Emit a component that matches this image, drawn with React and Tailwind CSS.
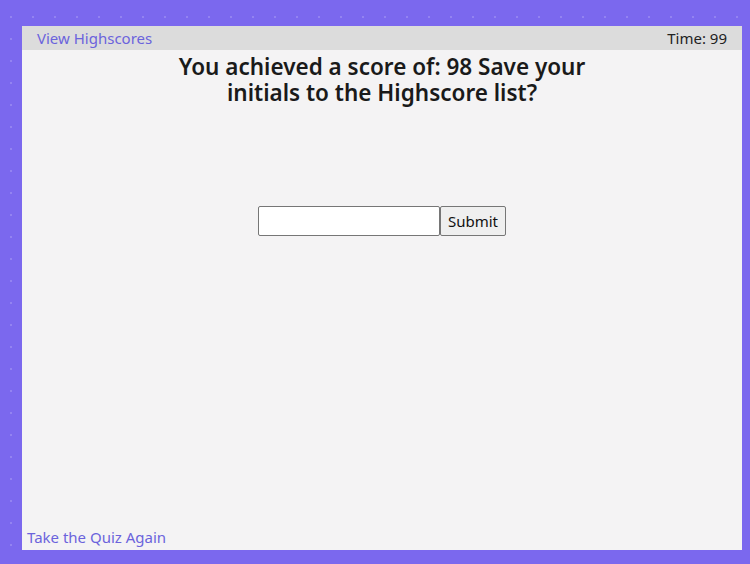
export default function App() {
  return (
    <div
      className="w-[750px] h-[564px] bg-[#7b68ee] bg-[radial-gradient(circle,rgba(255,255,255,0.18)_1px,transparent_1.5px)] bg-[size:22px_22px] bg-[position:0px_6px] pt-[26px] pl-[22px] pr-[8px] pb-[14px]"
      style={{ fontFamily: '"Noto Sans", "Open Sans", sans-serif' }}
    >
      <div className="h-full bg-[#f4f3f4] flex flex-col">
        {/* Header */}
        <div className="h-[24px] bg-[#dcdcdc] flex items-center justify-between pl-[15px] pr-[15px] text-[15px]">
          <a className="text-[#6b63dc]">View Highscores</a>
          <span className="text-[#222]">Time: 99</span>
        </div>

        {/* Content */}
        <div className="flex-1 flex flex-col items-center">
          <h1 className="w-[60%] text-center text-[22.5px] leading-[26px] font-semibold text-[#1a1a1a] mt-[4px]">
            You achieved a score of: 98 Save your initials to the Highscore list?
          </h1>
          <div className="flex mt-[100px]">
            <input className="w-[182px] h-[30px] bg-white border border-[#767676] rounded-[2px]" />
            <button className="h-[30px] px-[7px] bg-[#efefef] border border-[#767676] rounded-[2px] text-[15px] text-[#111]">
              Submit
            </button>
          </div>
        </div>

        {/* Footer */}
        <div className="pl-[5px] pb-[2px] text-[15px] text-[#6b63dc]">
          <a>Take the Quiz Again</a>
        </div>
      </div>
    </div>
  );
}
